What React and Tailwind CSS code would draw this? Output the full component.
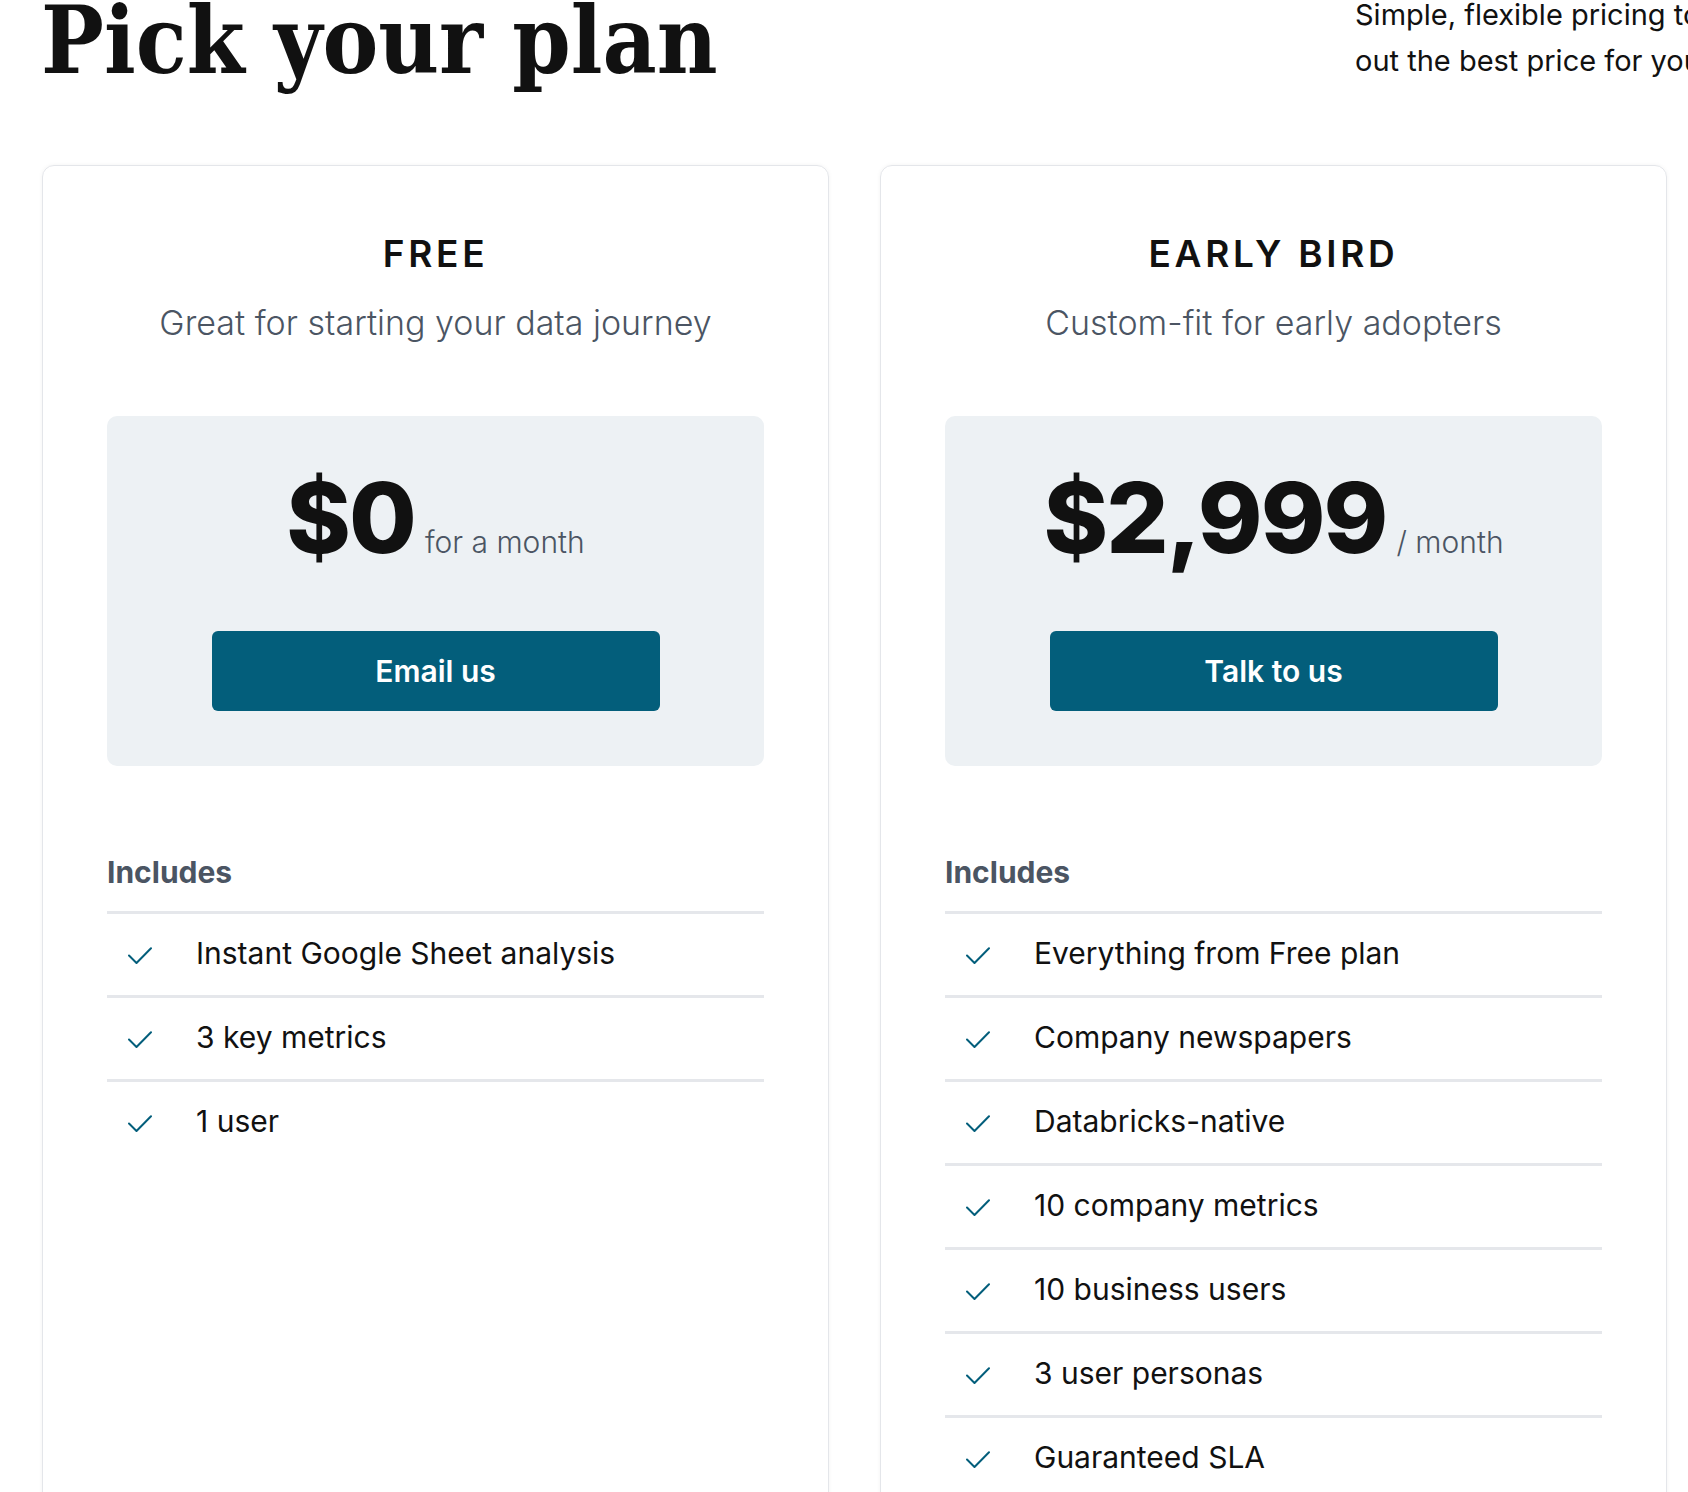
import React from 'react';

const plans = [
  {
    name: 'FREE',
    tagline: 'Great for starting your data journey',
    price: '$0',
    period: 'for a month',
    cta: 'Email us',
    features: ['Instant Google Sheet analysis', '3 key metrics', '1 user'],
  },
  {
    name: 'EARLY BIRD',
    tagline: 'Custom-fit for early adopters',
    price: '$2,999',
    period: '/ month',
    cta: 'Talk to us',
    features: [
      'Everything from Free plan',
      'Company newspapers',
      'Databricks-native',
      '10 company metrics',
      '10 business users',
      '3 user personas',
      'Guaranteed SLA',
    ],
  },
];

const CheckIcon = () => (
  <svg width="24" height="17" viewBox="0 0 24 17" fill="none" className="mt-[4px] shrink-0">
    <polyline points="1,8.5 8.5,16 23,1.2" stroke="#035e7b" strokeWidth="2" strokeLinecap="round" strokeLinejoin="round" />
  </svg>
);

const PlanCard = ({ plan }) => (
  <div className="w-[787px] shrink-0 rounded-xl border border-[#e4e6ea] px-[64px] pt-[66px] pb-[64px] shadow-[0_0_4px_rgba(0,0,0,0.05)]">
    <h2 className="text-center text-[37px] leading-[44px] font-semibold tracking-[0.1em] text-[#111]">{plan.name}</h2>
    <p className="mt-[27px] text-center text-[34px] leading-[40px] font-light text-[#4b5563]">{plan.tagline}</p>

    <div className="mt-[73px] rounded-[10px] bg-[#edf1f4] pt-[53px] pb-[55px]">
      <div className="flex items-baseline justify-center">
        <span className="text-[98px] leading-none font-extrabold tracking-[-0.02em] text-[#111]">{plan.price}</span>
        <span className="ml-[10px] text-[30px] font-light text-[#4b5563]">{plan.period}</span>
      </div>
      <button className="mx-auto mt-[64px] flex h-[80px] w-[448px] items-center justify-center rounded-[6px] bg-[#035e7b] text-[30px] font-semibold text-white">
        {plan.cta}
      </button>
    </div>

    <h3 className="mt-[88px] text-[30px] leading-[36px] font-bold text-[#4b5563]">Includes</h3>
    <ul className="mt-[21px]">
      {plan.features.map(f => (
        <li key={f} className="flex items-center border-t-[3px] border-[#e5e7eb] pt-[19px] pb-[22px] pl-[21px]">
          <CheckIcon />
          <span className="ml-[44px] text-[30px] leading-[40px] text-[#111]">{f}</span>
        </li>
      ))}
    </ul>
  </div>
);

export default function App() {
  return (
    <div className="h-[1492px] w-full overflow-hidden bg-white font-['Inter',sans-serif] text-[#111]">
      <div className="mt-[-6px] flex items-start justify-between pl-[41px]">
        <h1 className="font-['DejaVu_Serif_Condensed','DejaVu_Serif',serif] font-stretch-condensed text-[93px] leading-none font-bold text-[#111]">
          Pick your plan
        </h1>
        <p className="mt-[-2px] w-[333px] shrink-0 whitespace-nowrap text-[29px] leading-[46px] text-[#111]">
          Simple, flexible pricing to help you figure
          <br />
          out the best price for your team.
        </p>
      </div>

      <div className="mt-[78px] flex gap-[51px] pl-[42px]">
        {plans.map(p => (
          <PlanCard key={p.name} plan={p} />
        ))}
      </div>
    </div>
  );
}
